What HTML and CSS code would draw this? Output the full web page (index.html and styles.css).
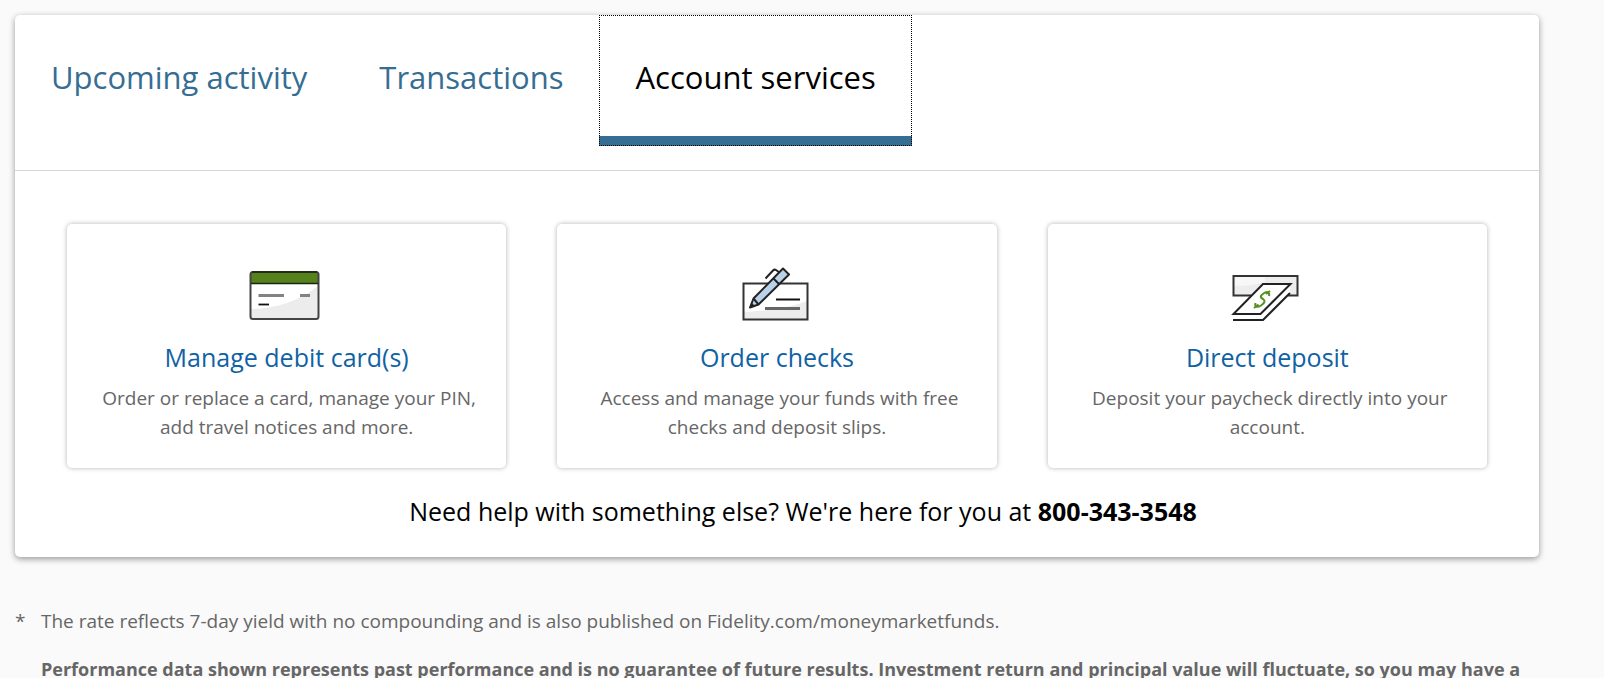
FILE: index.html
```html
<!DOCTYPE html>
<html lang="en">
<head>
<meta charset="utf-8">
<meta name="viewport" content="width=device-width, initial-scale=1">
<title>Account services</title>
<link rel="stylesheet" href="styles.css">
</head>
<body>
<main class="panel">
  <div class="tabs" role="tablist">
    <button class="tab" type="button" role="tab" aria-selected="false">Upcoming activity</button>
    <button class="tab" type="button" role="tab" aria-selected="false">Transactions</button>
    <button class="tab tab-active" type="button" role="tab" aria-selected="true" aria-controls="services">Account services</button>
  </div>
  <section class="services" id="services" role="tabpanel">
    <div class="cards">
      <article class="card">
        <svg class="icon" viewBox="19 10 76 60" fill="none" aria-hidden="true">
          <rect x="20.500" y="17" width="68" height="47" rx="2.500" fill="#fff"/>
          <path d="M21 54C45 54 69 46 88 31V62Q88 64 86 64H23Q21 64 21 62Z" fill="#ececec"/>
          <path d="M21 28V19Q21 17 23 17H86Q88 17 88 19V28Z" fill="#56821b"/>
          <rect x="20.500" y="17" width="68" height="47" rx="2.500" stroke="#444" stroke-width="2"/>
          <path d="M21 28.500H88M22 17H87" stroke="#1c2410" stroke-width="1.500"/>
          <path d="M28.500 40.500H54M70 40.500H80" stroke="#828282" stroke-width="3"/>
          <path d="M28.500 49.500H39" stroke="#111" stroke-width="1.800"/>
        </svg>
        <h2 class="card-title"><a href="#debit">Manage debit card(s)</a></h2>
        <p class="card-text">&nbsp;Order or replace a card, manage your PIN, add travel notices and more.</p>
      </article>
      <article class="card">
        <svg class="icon" viewBox="14 10 76 60" fill="none" aria-hidden="true">
          <rect x="18.500" y="28.500" width="64" height="36" fill="#fff"/>
          <path d="M19 57C43 56 64 53 82 46V64H19Z" fill="#ececec"/>
          <rect x="18.500" y="28.500" width="64" height="36" stroke="#333" stroke-width="2"/>
          <path d="M51 44.500H75" stroke="#111" stroke-width="2"/>
          <path d="M40 53.500H75" stroke="#666" stroke-width="3"/>
          <path d="M25 52.500L28.500 43.500L58 13.500L64 19.500L33.500 49.500Z" fill="#b9d2ea" stroke="#222" stroke-width="2" stroke-linejoin="round"/>
          <path d="M48 23L54.500 29.500M28.500 43.500L33.500 49.500M40.500 23.500L48 15.500Q49.500 14 51 15L54.500 17.500" stroke="#222" stroke-width="2"/>
          <path d="M24.500 53L26.500 47.500L30 51Z" fill="#222"/>
        </svg>
        <h2 class="card-title"><a href="#checks">Order checks</a></h2>
        <p class="card-text">&nbsp;Access and manage your funds with free checks and deposit slips.</p>
      </article>
      <article class="card">
        <svg class="icon" viewBox="14 10 76 60" fill="none" aria-hidden="true">
          <rect x="18.500" y="21" width="64" height="19" fill="#ededed"/>
          <path d="M19 21H50V27Q36 31 19 31Z" fill="#f7f7f7"/>
          <path d="M36 40.500H18.500V21H82.500V40.500H73" stroke="#333" stroke-width="2"/>
          <path d="M18 59L48 29H75V38L48 65H18Z" fill="#fff"/>
          <path d="M18.500 59L48 29H75.500L45.500 59ZM18 65H48L75 38" stroke="#222" stroke-width="2"/>
          <path d="M54 41C55 37 52 36 48.500 38.500C44 41.500 46 43 48 44C50.500 45.500 50 48 46 50.500C42 53 39.500 52 40.500 48M55 36L51 39M43.500 49.500L39 53" stroke="#56901e" stroke-width="2"/>
        </svg>
        <h2 class="card-title"><a href="#deposit">Direct deposit</a></h2>
        <p class="card-text">&nbsp;Deposit your paycheck directly into your account.</p>
      </article>
    </div>
    <p class="help">Need help with something else? We're here for you at <strong>800-343-3548</strong></p>
  </section>
</main>
<footer class="notes">
  <span class="mark">*</span>
  <div class="note-body">
    <p>The rate reflects 7-day yield with no compounding and is also published on Fidelity.com/moneymarketfunds.</p>
    <p class="disclosure"><strong>Performance data shown represents past performance and is no guarantee of future results. Investment return and principal value will fluctuate, so you may have a</strong></p>
  </div>
</footer>
</body>
</html>
```
FILE: styles.css
```css
* {
  box-sizing: border-box;
}

body {
  margin: 0;
  padding: 15px 65px 0 15px;
  background: #fafafa;
  color: #000;
  font-family: "Open Sans", Lato, sans-serif;
}

h2,
p {
  margin: 0;
  font-weight: 400;
}

.panel {
  background: #fff;
  border-radius: 5px;
  box-shadow: 0 2px 6px rgba(0, 0, 0, 0.4);
}

.tabs {
  display: flex;
  align-items: flex-start;
  padding-bottom: 24px;
  border-bottom: 1px solid #d6d6d6;
}

.tab {
  height: 131px;
  padding: 2px 36px 0;
  border: 0;
  border-bottom: 10px solid transparent;
  background: none;
  color: #366d93;
  font-family: inherit;
  font-size: 31px;
  line-height: 40px;
}

.tab-active {
  border-bottom-color: #366d93;
  outline: 1px dotted #000;
  outline-offset: -1px;
  color: #000;
}

.services {
  padding: 53px 52px 30px;
}

.cards {
  display: grid;
  grid-template-columns: repeat(3, 1fr);
  gap: 51px;
}

.card {
  display: flex;
  flex-direction: column;
  align-items: center;
  padding: 41px 28px 26px;
  border-radius: 5px;
  background: #fff;
  box-shadow: 0 0 5px rgba(0, 0, 0, 0.3);
  text-align: center;
}

.icon {
  width: 76px;
  height: 60px;
}

.card-title {
  margin-top: 16px;
  font-size: 25px;
  line-height: 32px;
}

.card-title a {
  color: #0f62a3;
  text-decoration: none;
}

.card-text {
  margin-top: 11px;
  color: #666;
  font-size: 19px;
  line-height: 29px;
}

.help {
  margin-top: 27px;
  padding-left: 52px;
  font-size: 25px;
  line-height: 32px;
  text-align: center;
}

.notes {
  display: flex;
  margin-top: 50px;
  color: #666;
  font-size: 19px;
  line-height: 29px;
}

.mark {
  flex: 0 0 26px;
}

.note-body {
  display: grid;
  flex: 1;
  gap: 19px;
}

.disclosure {
  font-size: 18px;
}
```
